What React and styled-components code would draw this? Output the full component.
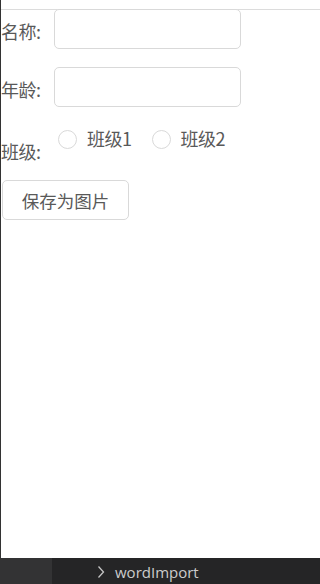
import React, { useState } from 'react'
import styled, { createGlobalStyle } from 'styled-components'

const GlobalStyle = createGlobalStyle`
    html, body {
        margin: 0;
        padding: 0;
        height: 100%;
        background: #fff;
    }
    #root {
        height: 100%;
    }
`

const classes = ['班级1', '班级2']

export default function App() {
    const [picked, setPicked] = useState(null)

    return (
        <Page>
            <GlobalStyle />
            <Canvas>
                <TopRule />
                <Form>
                    <Row>
                        <Label>名称:</Label>
                        <TextInput />
                    </Row>
                    <Row>
                        <Label>年龄:</Label>
                        <TextInput />
                    </Row>
                    <Row $top>
                        <Label $low>班级:</Label>
                        <RadioGroup>
                            {classes.map((name) => (
                                <RadioItem key={name} onClick={() => setPicked(name)}>
                                    <RadioDot $checked={picked === name} />
                                    <span>{name}</span>
                                </RadioItem>
                            ))}
                        </RadioGroup>
                    </Row>
                    <SaveButton>保存为图片</SaveButton>
                </Form>
            </Canvas>
            <StatusBar>
                <StatusSide />
                <StatusMain>
                    <Chevron viewBox="0 0 8 14" width="8" height="14">
                        <path d="M1.5 1.5 L6.5 7 L1.5 12.5" fill="none" stroke="#c5c5c5" strokeWidth="1.3" />
                    </Chevron>
                    <span>wordImport</span>
                </StatusMain>
            </StatusBar>
        </Page>
    )
}

const Page = styled.div`
    height: 100vh;
    display: flex;
    flex-direction: column;
    font-family: "Noto Sans CJK SC", "Noto Sans", sans-serif;
    color: #595959;
`

const Canvas = styled.div`
    flex: 1;
    border-left: 1px solid #333;
    display: flex;
    flex-direction: column;
`

const TopRule = styled.div`
    height: 9px;
    border-bottom: 1px solid #dcdcdc;
    margin-bottom: -1px;
`

const Form = styled.div`
    display: flex;
    flex-direction: column;
    align-items: flex-start;
    gap: 18px;
`

const Row = styled.div`
    display: flex;
    align-items: ${(p) => (p.$top ? 'flex-start' : 'center')};
    height: ${(p) => (p.$top ? '37px' : '40px')};
`

const Label = styled.label`
    width: 53px;
    font-size: 18px;
    line-height: 24px;
    letter-spacing: -0.5px;
    padding-top: ${(p) => (p.$low ? '14px' : '4px')};
    white-space: nowrap;
`

const TextInput = styled.input`
    box-sizing: border-box;
    width: 187px;
    height: 40px;
    border: 1px solid #d9d9d9;
    border-radius: 5px;
    padding: 0 11px;
    font-size: 16px;
    outline: none;
    &:focus {
        border-color: #40a9ff;
    }
`

const RadioGroup = styled.div`
    display: flex;
    gap: 20px;
    padding-top: 1px;
    margin-left: 4px;
`

const RadioItem = styled.div`
    display: flex;
    align-items: center;
    gap: 10px;
    font-size: 18px;
    line-height: 24px;
    letter-spacing: -0.5px;
    cursor: pointer;
`

const RadioDot = styled.span`
    box-sizing: border-box;
    width: 19px;
    height: 19px;
    border-radius: 50%;
    border: 1px solid ${(p) => (p.$checked ? '#1890ff' : '#d9d9d9')};
    background: #fff;
    box-shadow: ${(p) => (p.$checked ? 'inset 0 0 0 4px #fff, inset 0 0 0 10px #1890ff' : 'none')};
    margin-top: 2px;
`

const SaveButton = styled.button`
    box-sizing: border-box;
    margin-left: 1px;
    width: 127px;
    height: 40px;
    border: 1px solid #d9d9d9;
    border-radius: 5px;
    background: #fff;
    color: #595959;
    font-family: inherit;
    font-size: 17.5px;
    cursor: pointer;
    margin-top: 0;
`

const StatusBar = styled.div`
    height: 26px;
    display: flex;
    background: #252526;
`

const StatusSide = styled.div`
    width: 52px;
    background: #333334;
`

const StatusMain = styled.div`
    flex: 1;
    display: flex;
    align-items: center;
    padding-left: 45px;
    gap: 10px;
    color: #cccccc;
    font-family: "Open Sans", "Noto Sans", sans-serif;
    font-size: 15px;
    padding-top: 2px;
`

const Chevron = styled.svg`
    flex-shrink: 0;
`
